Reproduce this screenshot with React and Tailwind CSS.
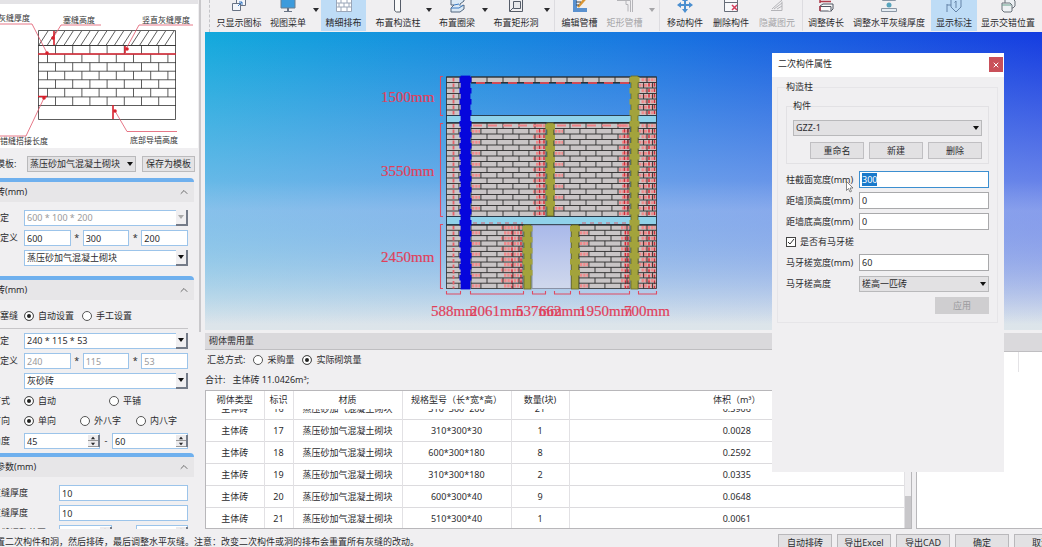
import { useEffect, useRef, useState } from 'react'
import { ChevronUp, X } from 'lucide-react'

const MATERIAL = '蒸压砂加气混凝土砌块'

const rows = [
  ['主体砖', '16', MATERIAL, '310*300*200', '21', '0.3906'],
  ['主体砖', '17', MATERIAL, '310*300*30', '1', '0.0028'],
  ['主体砖', '18', MATERIAL, '600*300*180', '8', '0.2592'],
  ['主体砖', '19', MATERIAL, '310*300*180', '2', '0.0335'],
  ['主体砖', '20', MATERIAL, '600*300*40', '9', '0.0648'],
  ['主体砖', '21', MATERIAL, '510*300*40', '1', '0.0061'],
]

/* ---------- small controls ---------- */

function Caret({ className = '' }) {
  return (
    <svg viewBox="0 0 6 4" className={`h-1 w-1.5 ${className}`}>
      <path d="M0 0h6L3 4z" fill="currentColor" />
    </svg>
  )
}

function Select({ id, label, options, className = '', flat, disabled }) {
  return (
    <div className={`relative h-4 ${className}`}>
      <select
        id={id}
        aria-label={label}
        disabled={disabled}
        className={`block h-full w-full appearance-none truncate border pl-0.5 leading-3 outline-none ${
          flat ? 'border-[#b9b9bb] bg-[#e2e1e3]' : 'border-[#9cc4ea] bg-white'
        } ${disabled ? 'text-[#9a9a9c]' : ''}`}
      >
        {options.map((o) => <option key={o}>{o}</option>)}
      </select>
      <span
        className={`pointer-events-none absolute inset-y-0 right-0 flex w-3 items-center justify-center ${
          flat ? '' : 'border-r-2 border-b-2 border-[#747b88] bg-[#f0eff1]'
        } ${disabled ? 'text-[#aaa]' : 'text-[#111]'}`}
      >
        <Caret />
      </span>
    </div>
  )
}

function Field({ label, value, className = '', disabled }) {
  return (
    <input
      aria-label={label}
      defaultValue={value}
      disabled={disabled}
      className={`h-4 min-w-0 border border-[#9cc4ea] bg-white px-0.5 outline-none disabled:text-[#9a9a9c] ${className}`}
    />
  )
}

function Spin({ label, value }) {
  return (
    <div className="relative flex min-w-0 flex-1">
      <Field label={label} value={value} className="w-full" />
      <div className="absolute inset-y-0.5 right-0 flex w-3 flex-col border-r-2 border-[#747b88] bg-[#ecebed]">
        <button aria-label="增加" className="flex flex-1 items-center justify-center border-b border-[#999]">
          <Caret className="rotate-180 scale-75" />
        </button>
        <button aria-label="减少" className="flex flex-1 items-center justify-center border-b border-[#999]">
          <Caret className="scale-75" />
        </button>
      </div>
    </div>
  )
}

function Radio({ name, label, checked, className = '' }) {
  return (
    <label className={`flex items-center gap-1 whitespace-nowrap ${className}`}>
      <input
        type="radio"
        name={name}
        defaultChecked={checked}
        className="size-2.5 shrink-0 appearance-none rounded-full border border-[#555] bg-white checked:bg-[#222] checked:shadow-[inset_0_0_0_2px_#fff]"
      />
      {label}
    </label>
  )
}

function Row({ label, wide, narrow, children }) {
  return (
    <div className="flex h-4 items-center">
      <span
        className={`flex shrink-0 whitespace-nowrap ${
          wide ? '-ml-2 w-[67px]' : narrow ? '-ml-2 w-8' : 'w-6'
        }`}
      >
        {label}
      </span>
      {children}
    </div>
  )
}

function Section({ title, children }) {
  return (
    <section className="shrink-0">
      <div className="mr-1 h-1 rounded-tr bg-[#6fb0ee]" />
      <header className="mr-1 flex h-5 items-center justify-between bg-[#e7e6e8] pr-1">
        <h2 className="-ml-1">{title}</h2>
        <button aria-label="收起"><ChevronUp className="size-3 text-[#444]" strokeWidth={1.5} /></button>
      </header>
      <div className="flex flex-col gap-1 pt-2 pr-2.5">{children}</div>
    </section>
  )
}

/* ---------- left panel ---------- */

function WallSketch() {
  const courses = [0, 1, 2, 3, 4, 5, 6]
  return (
    <svg viewBox="0 4 198 144" className="h-36 w-[198px]" fontSize="8" fill="#333">
      <g stroke="#333" strokeWidth="0.8" fill="none">
        <path d="M38.5 30.5h137v89h-137zM38 45.5h138M38 105.5h138" />
        {Array.from({ length: 16 }, (_, i) => (
          <path key={i} d={`M${48 + i * 8.4} 31L${39 + i * 8.4} 45`} />
        ))}
        {courses.map((c) => {
          const y = 45.5 + c * 8.57
          return (
            <g key={c}>
              <path d={`M38 ${y}h138`} />
              {Array.from({ length: c % 2 ? 8 : 7 }, (_, i) => (
                <path key={i} d={`M${(c % 2 ? 47.5 : 55.5) + i * 17.2} ${y}v8.57`} />
              ))}
            </g>
          )
        })}
      </g>
      <g stroke="#e0566a" strokeWidth="0.8" fill="none">
        <path d="M38 54h138" stroke="#e02c3a" strokeWidth="1.3" />
        <path d="M0 24h32l15 29M101 25H61L53 38M193 25h-54l-13 24M0 136h26l18-38M177 131.5h-50L115 111" />
        <path d="M54 31v14M125 46v7M38 96.5h9M113 105v14" stroke="#d8202c" strokeWidth="1.6" />
      </g>
      <g fill="#d8202c">
        <circle cx="47" cy="53" r="1.8" />
        <circle cx="53" cy="38" r="1.8" />
        <circle cx="127" cy="49" r="1.8" />
        <circle cx="44" cy="98" r="1.8" />
        <circle cx="115" cy="111" r="1.8" />
      </g>
      <text x="-2" y="21">灰缝厚度</text>
      <text x="63" y="23">塞缝高度</text>
      <text x="142" y="23">竖直灰缝厚度</text>
      <text x="0" y="144">错缝搭接长度</text>
      <text x="130" y="143">底部导墙高度</text>
    </svg>
  )
}

function SidePanel() {
  return (
    <aside className="flex w-[205px] shrink-0 overflow-hidden">
      <div className="flex w-[198px] shrink-0 flex-col">
        <div className="h-1 shrink-0 bg-[#e4e3e6]" />
        <div className="mb-2 shrink-0 overflow-hidden bg-white"><WallSketch /></div>
        <div className="mb-1.5 flex h-4 shrink-0 items-center">
          <span className="-ml-1 w-[31px] shrink-0 whitespace-nowrap">模板:</span>
          <Select label="模板" options={[MATERIAL]} flat className="w-[109px]" />
          <button className="ml-1.5 h-4 w-[53px] border border-[#bcbbbd] bg-[#e4e3e5] whitespace-nowrap">保存为模板</button>
        </div>
        <Section title="砖(mm)">
          <Row label="定"><Select label="限定尺寸" options={['600 * 100 * 200']} disabled className="flex-1" /></Row>
          <Row label="定义">
            <Field label="长" value="600" className="flex-1" />
            <span className="w-3 text-center">*</span>
            <Field label="宽" value="300" className="flex-1" />
            <span className="w-3 text-center">*</span>
            <Field label="高" value="200" className="flex-1" />
          </Row>
          <Row><Select label="材质" options={[MATERIAL]} className="flex-1" /></Row>
          <div className="h-1.5" />
        </Section>
        <Section title="砖(mm)">
          <Row label="塞缝">
            <Radio name="gap" label="自动设置" checked />
            <Radio name="gap" label="手工设置" className="ml-2" />
          </Row>
          <hr className="border-[#c6c5c8]" />
          <Row label="定"><Select label="塞缝砖尺寸" options={['240 * 115 * 53']} className="flex-1" /></Row>
          <Row label="定义">
            <Field label="塞缝砖长" value="240" disabled className="flex-1" />
            <span className="w-3 text-center">*</span>
            <Field label="塞缝砖宽" value="115" disabled className="flex-1" />
            <span className="w-3 text-center">*</span>
            <Field label="塞缝砖高" value="53" disabled className="flex-1" />
          </Row>
          <Row><Select label="塞缝砖材质" options={['灰砂砖']} className="flex-1" /></Row>
          <Row label="方式" narrow>
            <Radio name="mode" label="自动" checked className="w-[85px]" />
            <Radio name="mode" label="平铺" />
          </Row>
          <Row label="方向" narrow>
            <Radio name="dir" label="单向" checked className="w-14" />
            <Radio name="dir" label="外八字" className="w-14" />
            <Radio name="dir" label="内八字" />
          </Row>
          <Row label="角度" narrow>
            <Spin label="最小角度" value="45" />
            <span className="w-3 text-center">-</span>
            <Spin label="最大角度" value="60" />
          </Row>
        </Section>
        <div className="h-1 shrink-0" />
        <Section title="参数(mm)">
          <Row label="灰缝厚度" wide><Field label="水平灰缝厚度" value="10" className="flex-1" /></Row>
          <Row label="灰缝厚度" wide><Field label="竖直灰缝厚度" value="10" className="flex-1" /></Row>
          <Row label="灰缝调整范围" wide>
            <Spin label="最小灰缝" value="8" />
            <span className="w-6 text-center">-</span>
            <Spin label="最大灰缝" value="12" />
          </Row>
        </Section>
      </div>
      <div className="ml-px h-[332px] w-0.5 bg-[#c9c8cb]" />
    </aside>
  )
}

/* ---------- toolbar ---------- */

const icons = {
  windows: (
    <g fill="#f4f6fa" stroke="#687385">
      <path d="M5.5 1.5h9v7h-9z" /><path d="M1.500 6.500h8v7h-8z" /><path d="M7 9l4-4M8 5h3v3" stroke="#3b7bc4" />
    </g>
  ),
  monitor: (
    <g><path d="M1 1h14v10H1z" fill="#3d9bdc" stroke="#6d7f90" /><path d="M7 11h2v3h3v1H4v-1h3z" fill="#687385" /></g>
  ),
  bricks: (
    <g stroke="#9aa6b8" fill="#fff"><path d="M.5 1.5h15v13H.5zM.5 6h15M.5 10h15M5 2v4M11 2v4M3 6v4M8 6v4M13 6v4M5 10v4M11 10v4" /></g>
  ),
  column: <path d="M4.5 0v13.5l2 1.500h4V1" fill="#fafafa" stroke="#555c68" />,
  beam: (
    <g fill="#dbe9f5" stroke="#53677f"><path d="M2 3l4-3h9v4l-4 3v3l4-2v4l-4 3H2v-4l3-3H2z" /><path d="M2 11h8l4-3M5 8l5-1" stroke="#3b7bc4" /></g>
  ),
  hole: (
    <g fill="none" stroke="#555c68"><path d="M1.5 0v14.5h13V1" /><path d="M5.5 4.5h7v7h-7z" fill="#e8e8ea" /><path d="M2 14l3-3" /></g>
  ),
  pencil: (
    <g fill="none"><path d="M1 3v12h14v-4H5V3z" fill="#5a91cf" /><path d="M6 10l7-8" stroke="#d99635" strokeWidth="2.5" /><path d="M4 5h5M4 8h3" stroke="#444" /></g>
  ),
  slot: <path d="M0 3.500h9v4h2v7M13.5 15V3.5H9M15.5 15V2" fill="none" stroke="#b4b4b8" />,
  move: <path d="M8 0l3 4H9v3h3V5l4 3-4 3V9H9v3h2l-3 4-3-4h2V9H4v2L0 8l4-3v2h3V4H5z" fill="#4a8fd0" />,
  remove: (
    <g fill="#f8f8fa" stroke="#666d78"><path d="M1.5 2.5h13v12h-13zM1.5 5.5h13" /><path d="M9 8l5 5M14 8l-5 5" stroke="#d23c5a" strokeWidth="1.5" /></g>
  ),
  hide: <path d="M2 13.5h11v-9M3 12L13 3M5 12l8-6M8 12l5-3" fill="none" stroke="#b4b4b8" />,
  length: (
    <g fill="#fafafa" stroke="#4f5561"><path d="M2 9l3-2h10v5l-2 2H2z" /><path d="M2 9.5h11v5" /><path d="M2 4.5h11M2 1v5M2 9v5" stroke="#b03a48" strokeWidth="1.5" /></g>
  ),
  joint: (
    <g fill="#e6edf3" stroke="#8a96a4"><path d="M1.5 0v3.5h13V0M.5 11.5h15v3H.5z" /><circle cx="8" cy="8" r="2.5" fill="#58a4bd" stroke="none" /></g>
  ),
  tag: (
    <g fill="none" stroke="#6483a8"><path d="M5 2h10v8l-5 5-5-5zM1 7v8M1 8h4M10 4v7M8.5 5.5L10 4" /></g>
  ),
  stagger: (
    <g fill="#eef1f4" stroke="#687078"><path d="M5 2h8l2 2v5l-2 2H5z" /><path d="M2 6h8l2 2v6l-1 1H4l-2-2z" /><path d="M2 8h9" stroke="#69a08c" /></g>
  ),
}

const tools = [
  { label: '只显示图标', icon: 'windows', w: 'w-[52px]' },
  { label: '视图菜单', icon: 'monitor', w: 'w-[46px]', menu: true },
  { label: '精细排布', icon: 'bricks', w: 'w-[45px] mr-1.5', active: true },
  { label: '布置构造柱', icon: 'column', w: 'w-[52px]', menu: true },
  { label: '布置圈梁', icon: 'beam', w: 'w-[46px]', menu: true },
  { label: '布置矩形洞', icon: 'hole', w: 'w-[52px]', menu: true, sep: true },
  { label: '编辑管槽', icon: 'pencil', w: 'w-[45px]' },
  { label: '矩形管槽', icon: 'slot', w: 'w-[45px]', menu: true, sep: true, disabled: true },
  { label: '移动构件', icon: 'move', w: 'w-[46px]' },
  { label: '删除构件', icon: 'remove', w: 'w-[46px]' },
  { label: '隐藏图元', icon: 'hide', w: 'w-[46px]', sep: true, disabled: true },
  { label: '调整砖长', icon: 'length', w: 'w-[42px]' },
  { label: '调整水平灰缝厚度', icon: 'joint', w: 'w-[84px]' },
  { label: '显示标注', icon: 'tag', w: 'w-[46px]', active: true },
  { label: '显示交错位置', icon: 'stagger', w: 'w-[62px]' },
]

function Toolbar() {
  return (
    <div className="flex h-8 shrink-0 overflow-hidden pl-1">
      <div className="mr-0.5 w-0.5 border-l border-dashed border-[#c4c4c8]" />
      {tools.map((t) => (
        <div key={t.label} className="flex h-[31px] shrink-0">
          <button
            disabled={t.disabled}
            className={`flex flex-col items-center justify-end gap-0.5 whitespace-nowrap ${t.w} ${
              t.active ? 'bg-[#bedcf6]' : ''
            } ${t.disabled ? 'text-[#a5a5a8]' : ''}`}
          >
            <svg viewBox="0 0 16 16" className="size-4 shrink-0">{icons[t.icon]}</svg>
            <span className="leading-4">{t.label}</span>
          </button>
          {t.menu && (
            <button aria-label={`${t.label}选项`} disabled={t.disabled} className="flex w-2.5 justify-center pt-2 disabled:text-[#a5a5a8]">
              <Caret />
            </button>
          )}
          {t.sep && <div className="mx-0.5 w-px bg-[#dddce0]" />}
        </div>
      ))}
    </div>
  )
}

/* ---------- elevation drawing ---------- */

const COURSE = 5.5

function Bricks({ x, y, w, h, marks = 0, step = 16 }) {
  const lines = []
  const red = []
  const n = Math.round(h / COURSE)
  const ch = h / n
  for (let r = 0; r < n; r++) {
    const top = y + r * ch
    lines.push(`M${x} ${top}h${w}`)
    for (let bx = x + (r % 2 ? step * 0.62 : step); bx < x + w - 2; bx += step) lines.push(`M${bx} ${top}v${ch}`)
    if (marks) {
      const mid = top + ch / 2
      if (r % 2) red.push(`M${x + 1} ${mid}h8`)
      red.push(`M${x + w - marks + (r % 2) * 3} ${mid}h${marks - 1 - (r % 2) * 3}`)
    }
  }
  return (
    <g>
      <rect x={x} y={y} width={w} height={h} fill="#c9c5c6" stroke="#2a2a2a" strokeWidth="0.8" />
      <path d={red.join('')} stroke="#f08a8c" strokeWidth="3.2" strokeDasharray="2.4 0.8" />
      {marks > 0 && (
        <path
          d={`M${x + w - marks / 2} ${y + 6}V${y + h}M${x + w - 2} ${y + 6}V${y + h}`}
          stroke="#cc2f3c"
          strokeWidth="1.3"
          strokeDasharray="3.5 2"
        />
      )}
      <path d={lines.join('')} stroke="#2a2a2a" strokeWidth="0.9" />
    </g>
  )
}

function SideBricks({ y, h }) {
  return (
    <g>
      <Bricks x={446.5} y={y} w={15} h={h} step={20} />
      <path d={`M453.5 ${y + 1}v${h - 1}`} stroke="#e5626a" strokeWidth="1.8" strokeDasharray="3.5 2" />
      <Bricks x={638} y={y} w={18.5} h={h} marks={15} step={9} />
    </g>
  )
}

function Column({ x, y, w, h, fill, edge }) {
  const n = Math.floor(h / (COURSE * 2))
  return (
    <g fill={fill}>
      <rect x={x} y={y} width={w} height={h} stroke={edge} strokeWidth="0.8" />
      {Array.from({ length: n }, (_, i) => (
        <rect key={i} x={x - 1.5} y={y + 1 + i * COURSE * 2} width={w + 3} height={COURSE} />
      ))}
    </g>
  )
}

function Elevation() {
  const olive = { fill: '#a3a33c', edge: '#6a6a22' }
  return (
    <svg viewBox="375 65 300 260" className="h-[260px] w-[300px] shrink-0">
      <defs>
        <linearGradient id="door" x1="0" y1="0" x2="0" y2="1">
          <stop offset="0" stopColor="#a9b9ea" />
          <stop offset="1" stopColor="#d0d8ec" />
        </linearGradient>
      </defs>
      <SideBricks y={77} h={38.5} />
      <SideBricks y={123} h={93.5} />
      <SideBricks y={225} h={63.5} />
      <Bricks x={471} y={77} w={159} h={5.5} />
      <path d="M471 83h159" stroke="#222" strokeWidth="1.2" />
      <path d="M476 83h153" stroke="#d04a56" strokeWidth="1.8" strokeDasharray="9 7" />
      <rect x="446.5" y="115.5" width="210" height="7" fill="#90d2ea" stroke="#234" strokeWidth="0.9" />
      <Bricks x={471} y={123} w={75} h={93.5} marks={13} />
      <Bricks x={554} y={123} w={76} h={93.5} marks={11} />
      <path d="M473 125.5h72M557 125.5h72" stroke="#ee8084" strokeWidth="2" strokeDasharray="9 6" />
      <rect x="446.5" y="216.5" width="210" height="8" fill="#90d2ea" stroke="#234" strokeWidth="0.9" />
      <Bricks x={471} y={225} w={52} h={63.5} marks={22} />
      <Bricks x={579} y={225} w={51} h={63.5} marks={9} />
      <path d="M473 223h50M582 223h46" stroke="#d0606c" strokeDasharray="4 4" />
      <rect x="532" y="225" width="39" height="63.5" fill="url(#door)" stroke="#667" strokeWidth="0.6" />
      <Column x={461} y={76} w={9} h={213} fill="#0606dc" edge="#0606dc" />
      <Column x={547} y={123} w={6.5} h={93} {...olive} />
      <Column x={631} y={76} w={7} h={213} {...olive} />
      <Column x={524} y={225} w={7} h={64} {...olive} />
      <Column x={571.5} y={225} w={7} h={64} {...olive} />

      <g fill="none" stroke="#e04a62" strokeWidth="1.1">
        <path d="M443 76.5h-2.5v39h2.5M443 123.5h-2.5v93h2.5M443 224.5h-2.5v64h2.5" />
        <path d="M446.5 291v3h14v-3M470.5 291v3h53v-3M532.5 291v3h13v-3M554.5 291v3h16v-3M579.5 291v3h50v-3M638.5 291v3h18v-3" />
      </g>
      <g fill="#e0405a" stroke="#e0405a" strokeWidth="0.2" fontFamily="Liberation Serif, serif" fontSize="15">
        <text x="381" y="102">1500mm</text>
        <text x="381" y="176">3550mm</text>
        <text x="381" y="262">2450mm</text>
        <text x="431" y="316">588mm</text>
        <text x="470" y="316">2061mm</text>
        <text x="516" y="316">537mm</text>
        <text x="539" y="316">662mm</text>
        <text x="579" y="316">1950mm</text>
        <text x="624" y="316">700mm</text>
      </g>
    </svg>
  )
}

/* ---------- quantity table ---------- */

function QuantityPanel() {
  const line = 'border-r border-[#e2e1e4]'
  return (
    <div className="flex w-[707px] shrink-0 flex-col">
      <h2 className="flex h-[17px] shrink-0 items-center border-b border-[#bfbec1] bg-[#dad9dc] pl-1">砌体需用量</h2>
      <div className="mt-0.5 flex h-4 shrink-0 items-center pl-0.5">
        汇总方式:
        <Radio name="sum" label="采购量" className="ml-2" />
        <Radio name="sum" label="实际砌筑量" checked className="ml-2" />
      </div>
      <p className="mt-1 mb-0.5 h-4 shrink-0 leading-4">合计:&nbsp;&nbsp; 主体砖 11.0426m³;</p>
      <div className="flex min-h-0 flex-1 overflow-hidden border border-[#b8b7ba] bg-white">
        <table className="w-full table-fixed border-collapse self-start text-center">
          <colgroup>
            <col className="w-[58px]" /><col className="w-[29px]" /><col className="w-[109px]" />
            <col className="w-[109px]" /><col className="w-[58px]" /><col />
          </colgroup>
          <thead>
            <tr className="h-[18px]">
              {['砌体类型', '标识', '材质', '规格型号（长*宽*高）', '数量(块)', '体积（m³）'].map((h) => (
                <th key={h} className={`p-0 font-normal whitespace-nowrap ${line}`}>{h}</th>
              ))}
            </tr>
          </thead>
          <tbody>
            {rows.map((r, i) => (
              <tr key={r[1]} className="border-b border-[#dcdbde]">
                {r.map((cell, c) => (
                  <td key={c} className={`p-0 ${line}`}>
                    <div className={`flex flex-col justify-end overflow-hidden leading-[21px] ${i === 0 ? 'h-2.5' : 'h-[21px]'}`}>
                      <div>{cell}</div>
                    </div>
                  </td>
                ))}
              </tr>
            ))}
          </tbody>
        </table>
        <div className="flex w-1.5 shrink-0 flex-col justify-end bg-[#f0eff1]">
          <div className="h-8 bg-[#c8c7ca]" />
        </div>
      </div>
    </div>
  )
}

/* ---------- property dialog ---------- */

function DialogRow({ id, label, children }) {
  return (
    <div className="flex h-[17px] items-center">
      <label htmlFor={id} className="w-[73px] shrink-0 whitespace-nowrap">{label}</label>
      {children}
    </div>
  )
}

function PropertyDialog() {
  const widthRef = useRef(null)
  const [hasTooth, setHasTooth] = useState(true)

  useEffect(() => {
    widthRef.current.focus()
    widthRef.current.select()
  }, [])

  const box = 'h-[17px] min-w-0 flex-1 border border-[#a9a9ab] bg-white px-0.5 outline-none'
  const btn = 'h-[17px] w-[54px] border border-[#c0bfc2] bg-[#e2e1e3]'

  return (
    <div role="dialog" aria-label="二次构件属性" className="absolute top-[53px] right-[38px] h-[419px] w-[232px] bg-[#f0eff1]">
      <div className="flex h-6 justify-between bg-white pl-1.5">
        <h2 className="leading-[22px]">二次构件属性</h2>
        <button aria-label="关闭" className="mt-1 mr-px flex h-[15px] w-3.5 items-center justify-center bg-[#c9505a] text-white">
          <X className="size-2" strokeWidth={3} />
        </button>
      </div>
      <fieldset className="mr-1.5 ml-[5px] mt-0.5 min-w-0 border border-[#e6e5e8] px-2 pb-2">
        <legend className="px-0 leading-4">构造柱</legend>
        <fieldset className="mt-[3px] min-w-0 border border-[#e2e1e4] px-1.5 pb-1">
          <legend className="px-0 leading-4">构件</legend>
          <div className="flex flex-col gap-1.5 pt-1.5">
            <Select label="构件" options={['GZZ-1']} flat />
            <div className="flex justify-end gap-[5px]">
              <button className={btn}>重命名</button>
              <button className={btn}>新建</button>
              <button className={btn}>删除</button>
            </div>
          </div>
        </fieldset>
        <div className="mt-[7px] flex flex-col gap-1">
          <DialogRow id="width" label="柱截面宽度(mm)">
            <input
              id="width"
              ref={widthRef}
              defaultValue="300"
              className="h-[17px] min-w-0 flex-1 border border-[#3c8fd0] bg-white px-0.5 outline-none selection:bg-[#1979ca] selection:text-white"
            />
          </DialogRow>
          <DialogRow id="top" label="距墙顶高度(mm)"><input id="top" defaultValue="0" className={box} /></DialogRow>
          <DialogRow id="bottom" label="距墙底高度(mm)"><input id="bottom" defaultValue="0" className={box} /></DialogRow>
          <label className="flex h-4 items-center gap-1">
            <span className="relative flex size-2.5">
              <input
                type="checkbox"
                checked={hasTooth}
                onChange={(e) => setHasTooth(e.target.checked)}
                className="size-2.5 appearance-none border border-[#444] bg-white"
              />
              {hasTooth && (
                <svg viewBox="0 0 10 10" className="pointer-events-none absolute inset-0">
                  <path d="M2 5l2 2 4-5" fill="none" stroke="#333" />
                </svg>
              )}
            </span>
            是否有马牙槎
          </label>
          <DialogRow id="tooth" label="马牙槎宽度(mm)"><input id="tooth" defaultValue="60" className={box} /></DialogRow>
          <DialogRow id="toothHeight" label="马牙槎高度"><Select id="toothHeight" options={['槎高一匹砖']} flat className="flex-1" /></DialogRow>
          <button disabled className="mt-px h-[17px] w-[54px] self-end bg-[#cfced0] text-[#9b9b9e]">应用</button>
        </div>
      </fieldset>
      <svg viewBox="0 0 8 12" className="absolute top-[128px] left-[74px] h-3 w-2">
        <path d="M.5.5v9l2-2 1.500 3.500 1.500-.7L4 7h3z" fill="#fff" stroke="#555" strokeWidth="0.7" />
      </svg>
    </div>
  )
}

export default function App() {
  return (
    <div className="relative flex h-screen flex-col overflow-hidden bg-[#f0eff1] font-['Noto_Sans','Noto_Sans_CJK_SC',sans-serif] text-[9px] leading-3 text-[#2b2b2e]">
      <div className="flex min-h-0 flex-1">
        <SidePanel />
        <main className="flex min-w-0 flex-1 flex-col overflow-hidden">
          <Toolbar />
          <div className="flex h-[298px] shrink-0 overflow-hidden bg-[linear-gradient(to_bottom,transparent_0%,rgba(185,200,242,0.6)_60%,transparent_100%),linear-gradient(to_bottom,transparent_50%,#dde5ea_98%),linear-gradient(to_right,#12a9dc,#1678e0_50%,#143ce0)] pt-[33px] pl-[170px]">
            <Elevation />
          </div>
          <div className="flex min-h-0 flex-1 gap-1 pt-[3px]">
            <QuantityPanel />
            <div className="flex min-w-0 flex-1 flex-col">
              <div className="h-[19px] shrink-0 border-b border-[#bfbec1] bg-[#dad9dc]" />
              <div className="flex-1 border-b border-l border-[#b8b7ba] bg-white">
                <div className="ml-[101px] h-5 w-px bg-[#e4e3e6]" />
              </div>
            </div>
          </div>
        </main>
      </div>
      <footer className="flex h-[18px] shrink-0 items-start justify-between overflow-hidden pt-[5px]">
        <p className="-ml-1 pt-0.5 whitespace-nowrap">
          置二次构件和洞，然后排砖，最后调整水平灰缝。注意：改变二次构件或洞的排布会重置所有灰缝的改动。
        </p>
        <div className="-mr-[26px] flex shrink-0 gap-[5px]">
          {['自动排砖', '导出Excel', '导出CAD', '确定', '取消'].map((b) => (
            <button key={b} className="h-[18px] w-[54px] border border-[#b9b8bb] bg-[#e2e1e3]">{b}</button>
          ))}
        </div>
      </footer>
      <PropertyDialog />
    </div>
  )
}
